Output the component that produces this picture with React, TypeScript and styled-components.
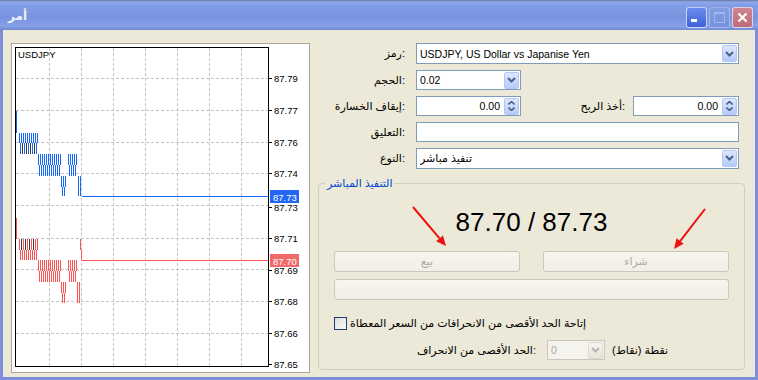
import styled, { createGlobalStyle } from 'styled-components'

const FONT = `"Liberation Sans", "DejaVu Sans", sans-serif`

const GlobalStyle = createGlobalStyle`
  html, body {
    margin: 0;
    padding: 0;
    background: #ece9d8;
  }
  body {
    font-family: ${FONT};
    font-size: 11px;
    color: #000;
  }
`

const Window = styled.div`
  width: 758px;
  height: 380px;
  display: flex;
  flex-direction: column;
  overflow: hidden;
`

const TitleBar = styled.div`
  height: 30px;
  flex: none;
  display: flex;
  align-items: center;
  justify-content: space-between;
  padding: 0 5px 0 8px;
  box-sizing: border-box;
  background: linear-gradient(
    to bottom,
    #66799f 0px,
    #8ea7ec 2px,
    #809ce4 6px,
    #7994df 18px,
    #86a1e8 26px,
    #6f89d3 30px
  );
`

const Title = styled.div`
  font-family: "DejaVu Sans", sans-serif;
  font-weight: bold;
  font-size: 12px;
  color: #eef2fc;
  margin-top: 2px;
`

const TitleButtons = styled.div`
  display: flex;
  gap: 2px;
  margin-top: 4px;
`

const TitleBtn = styled.div<{ $kind: 'min' | 'max' | 'close' }>`
  width: 21px;
  height: 21px;
  box-sizing: border-box;
  border-radius: 3px;
  border: 1px solid
    ${(p) => (p.$kind === 'max' ? 'rgba(190,205,245,0.55)' : 'rgba(235,240,255,0.75)')};
  background: ${(p) =>
    p.$kind === 'min'
      ? 'linear-gradient(#6a8cef, #3f63d8)'
      : p.$kind === 'close'
        ? 'linear-gradient(#cf8691, #bb6c78)'
        : 'linear-gradient(#849ee4, #7690dc)'};
  display: flex;
  align-items: center;
  justify-content: center;
  position: relative;
`

const MinDash = styled.div`
  position: absolute;
  left: 4px;
  bottom: 5px;
  width: 6px;
  height: 3px;
  background: #fff;
`

const MaxBox = styled.div`
  width: 11px;
  height: 11px;
  box-sizing: border-box;
  border: 1px solid #a2b6ea;
  border-top-width: 2px;
`

const Frame = styled.div`
  flex: 1;
  display: flex;
  align-items: flex-start;
  border: 3px solid #7d8edb;
  border-top: none;
  background: #ece9d8;
  padding: 13px 0 0 8px;
  box-sizing: border-box;
`

const ChartPanel = styled.div`
  width: 299px;
  height: 330px;
  flex: none;
  box-sizing: border-box;
  border: 1px solid #aca899;
  background: #fff;
  svg {
    display: block;
  }
`

const Side = styled.div`
  width: 427px;
  margin-left: 8px;
  display: flex;
  flex-direction: column;
`

const Rows = styled.div`
  display: flex;
  flex-direction: column;
  gap: 6px;
  padding-right: 6px;
`

const Row = styled.div<{ $h: number }>`
  display: flex;
  align-items: center;
  height: ${(p) => p.$h}px;
`

// the dialog is a left-to-right window, so a trailing colon lands on the right
const Label = styled.div<{ $w?: number }>`
  ${(p) => (p.$w ? `width: ${p.$w}px; flex: none;` : 'flex: 1;')}
  text-align: right;
  white-space: nowrap;
  margin-right: ${(p) => (p.$w ? 11 : 8)}px;
`

const Field = styled.div<{ $w: number; $h: number; $disabled?: boolean }>`
  width: ${(p) => p.$w}px;
  height: ${(p) => p.$h}px;
  flex: none;
  box-sizing: border-box;
  border: 1px solid ${(p) => (p.$disabled ? '#c9c7ba' : '#7f9db9')};
  background: ${(p) => (p.$disabled ? '#f4f3ee' : '#fff')};
  color: ${(p) => (p.$disabled ? '#aca899' : '#000')};
  display: flex;
  align-items: center;
  padding-left: 3px;
  font-size: 10.5px;
`

const FieldText = styled.span<{ $right?: boolean }>`
  flex: 1;
  white-space: nowrap;
  overflow: hidden;
  text-align: ${(p) => (p.$right ? 'right' : 'left')};
  padding-right: ${(p) => (p.$right ? 4 : 0)}px;
`

const ArabicText = styled.span`
  font-size: 11px;
`

const SideBtn = styled.div<{ $disabled?: boolean }>`
  width: 15px;
  height: 17px;
  margin-right: 1px;
  flex: none;
  box-sizing: border-box;
  border: 1px solid ${(p) => (p.$disabled ? '#dcdad0' : '#b4c7f3')};
  border-radius: 2px;
  background: ${(p) =>
    p.$disabled ? 'linear-gradient(#f6f5f0, #e6e4da)' : 'linear-gradient(#dde7fe, #b6cbfa)'};
  display: flex;
  flex-direction: column;
  align-items: center;
  justify-content: center;
  gap: 2px;
`

const GroupBox = styled.div`
  margin-top: 15px;
  position: relative;
  height: 187px;
  box-sizing: border-box;
  border: 1px solid #d0d0bf;
  border-radius: 4px;
  padding: 0 15px;
`

const Legend = styled.div`
  position: absolute;
  top: -7px;
  left: 6px;
  padding: 0 2px;
  background: #ece9d8;
  color: #0046d5;
  line-height: 13px;
`

const Price = styled.div`
  margin-top: 23px;
  height: 30px;
  line-height: 30px;
  font-size: 26px;
  text-align: center;
`

const BtnRow = styled.div`
  margin-top: 14px;
  display: flex;
  justify-content: space-between;
`

const DisabledBtn = styled.div<{ $w?: number }>`
  width: ${(p) => (p.$w ? `${p.$w}px` : 'auto')};
  height: 21px;
  box-sizing: border-box;
  border: 1px solid #cac8bb;
  border-radius: 3px;
  background: linear-gradient(#f6f5ef, #f1efe6);
  color: #aca899;
  display: flex;
  align-items: center;
  justify-content: center;
`

const WideBar = styled(DisabledBtn)`
  margin-top: 7px;
`

const CheckRow = styled.div`
  margin-top: 17px;
  height: 13px;
  display: flex;
  align-items: center;
  gap: 3px;
`

const CheckBox = styled.div`
  width: 13px;
  height: 13px;
  box-sizing: border-box;
  border: 1px solid #1c3f6e;
  background: linear-gradient(135deg, #dcdcd7, #fbfbf9);
`

const DevRow = styled.div`
  margin-top: 10px;
  height: 20px;
  display: flex;
  align-items: center;
`

const Units = styled.span`
  margin-left: 7px;
  white-space: nowrap;
`

const Arrows = styled.svg`
  position: absolute;
  left: 0;
  top: 0;
  pointer-events: none;
`

function Chevron({ color = '#4d6185' }: { color?: string }) {
  return (
    <svg width="9" height="6" viewBox="0 0 9 6">
      <path d="M1 1 L4.5 4.5 L8 1" stroke={color} strokeWidth="2" fill="none" />
    </svg>
  )
}

function SmallArrow({ up }: { up?: boolean }) {
  return (
    <svg width="7" height="4" viewBox="0 0 7 4">
      <path d={up ? 'M0.5 3.5 L3.5 0.5 L6.5 3.5' : 'M0.5 0.5 L3.5 3.5 L6.5 0.5'} stroke="#4d6185" strokeWidth="1.6" fill="none" />
    </svg>
  )
}

function Combo({ w, h, children, disabled }: { w: number; h: number; children?: React.ReactNode; disabled?: boolean }) {
  return (
    <Field $w={w} $h={h} $disabled={disabled}>
      <FieldText>{children}</FieldText>
      <SideBtn $disabled={disabled}>
        <Chevron color={disabled ? '#b8b6aa' : '#4d6185'} />
      </SideBtn>
    </Field>
  )
}

function Spin({ w, value }: { w: number; value: string }) {
  return (
    <Field $w={w} $h={20}>
      <FieldText $right>{value}</FieldText>
      <SideBtn>
        <SmallArrow up />
        <SmallArrow />
      </SideBtn>
    </Field>
  )
}

// chart drawn in page coordinates
const OX = 12
const OY = 44
const gridX = [49, 81, 113, 145, 177, 209, 241]
const gridY = [78, 110, 142, 173, 205, 238, 269, 301, 333]
const axis: [number, string][] = [
  [78, '87.79'],
  [110, '87.77'],
  [142, '87.76'],
  [173, '87.74'],
  [207, '87.73'],
  [238, '87.71'],
  [270, '87.69'],
  [301, '87.68'],
  [333, '87.66'],
  [364, '87.65'],
]

type Seg = [number, number, number, number, number, string, number?]

function hatch(segs: Seg[]) {
  const out: JSX.Element[] = []
  segs.forEach(([x1, x2, y1, y2, off, color, step = 2], i) => {
    for (let x = x1 + off; x <= x2; x += step) {
      out.push(<line key={`${i}-${x}`} x1={x + 0.5} x2={x + 0.5} y1={y1} y2={y2} stroke={color} />)
    }
  })
  return out
}

const BLUE = '#1666ff'
const RED = '#ff5252'
const DARK = '#3a3a3a'

const blueSegs: Seg[] = [
  [16, 16, 111, 133, 0, BLUE],
  [19, 37, 133, 143, 0, BLUE],
  [19, 37, 143, 154, 1, BLUE],
  [20, 36, 143, 154, 2, DARK, 4],
  [38, 60, 154, 165, 0, BLUE],
  [38, 60, 165, 176, 1, BLUE],
  [61, 65, 176, 187, 0, BLUE],
  [61, 65, 187, 196, 1, BLUE],
  [68, 76, 154, 165, 0, BLUE],
  [68, 76, 165, 176, 1, BLUE],
  [77, 81, 176, 196, 1, BLUE],
]

const redSegs: Seg[] = [
  [16, 16, 218, 239, 0, RED],
  [19, 37, 239, 250, 0, RED],
  [20, 36, 239, 250, 1, DARK, 4],
  [19, 37, 250, 260, 1, RED],
  [38, 60, 260, 271, 0, RED],
  [38, 60, 271, 282, 1, RED],
  [61, 65, 282, 293, 0, RED],
  [61, 65, 293, 303, 1, RED],
  [68, 76, 260, 271, 0, RED],
  [68, 76, 271, 282, 1, RED],
  [77, 79, 282, 303, 0, RED],
  [80, 81, 239, 250, 0, RED],
  [81, 81, 250, 260, 0, RED],
]

function Chart() {
  return (
    <svg width={297} height={328} viewBox={`${OX} ${OY} 297 328`} shapeRendering="crispEdges">
      {gridX.map((x) => (
        <line key={`gx${x}`} x1={x + 0.5} x2={x + 0.5} y1={48} y2={366} stroke="#c4c4c4" strokeDasharray="3 2" />
      ))}
      {gridY.map((y) => (
        <line key={`gy${y}`} x1={16} x2={268} y1={y + 0.5} y2={y + 0.5} stroke="#c4c4c4" strokeDasharray="3 2" />
      ))}
      <text x={18} y={58} fontSize="9.5" fontFamily={FONT} fill="#000">
        USDJPY
      </text>
      {hatch(blueSegs)}
      {hatch(redSegs)}
      <line x1={82} x2={268} y1={196.5} y2={196.5} stroke={BLUE} />
      <line x1={82} x2={268} y1={260.5} y2={260.5} stroke={RED} />
      <path d="M15.5 47 V366.5 H268.5 V47 M15 47.5 H268.5" stroke="#000" fill="none" />
      {axis.map(([y, t]) => (
        <g key={t + y}>
          <line x1={268} x2={272} y1={y + 0.5} y2={y + 0.5} stroke="#000" />
          <text x={274} y={y + 4} fontSize="9.5" fontFamily={FONT} fill="#000" shapeRendering="auto">
            {t}
          </text>
        </g>
      ))}
      <rect x={270} y={190} width={29} height={13} fill="#2467f5" />
      <text x={273} y={200.5} fontSize="9.5" fontFamily={FONT} fill="#fff">
        87.73
      </text>
      <rect x={270} y={254} width={29} height={13} fill="#f06a6a" />
      <text x={273} y={264.5} fontSize="9.5" fontFamily={FONT} fill="#fff">
        87.70
      </text>
    </svg>
  )
}

function Arrow({ x1, y1, x2, y2 }: { x1: number; y1: number; x2: number; y2: number }) {
  const dx = x2 - x1
  const dy = y2 - y1
  const len = Math.hypot(dx, dy)
  const ux = dx / len
  const uy = dy / len
  const bx = x2 - ux * 10
  const by = y2 - uy * 10
  const px = -uy * 4.5
  const py = ux * 4.5
  return (
    <g>
      <line x1={x1} y1={y1} x2={bx} y2={by} stroke="#ee1111" strokeWidth="2" />
      <polygon points={`${x2},${y2} ${bx + px},${by + py} ${bx - px},${by - py}`} fill="#ee1111" />
    </g>
  )
}

export default function App() {
  return (
    <>
      <GlobalStyle />
      <Window>
        <TitleBar>
          <Title>أمر</Title>
          <TitleButtons>
            <TitleBtn $kind="min">
              <MinDash />
            </TitleBtn>
            <TitleBtn $kind="max">
              <MaxBox />
            </TitleBtn>
            <TitleBtn $kind="close">
              <svg width="11" height="11" viewBox="0 0 11 11">
                <path d="M1.5 1.5 L9.5 9.5 M9.5 1.5 L1.5 9.5" stroke="#fff" strokeWidth="2.2" />
              </svg>
            </TitleBtn>
          </TitleButtons>
        </TitleBar>
        <Frame>
          <ChartPanel>
            <Chart />
          </ChartPanel>
          <Side>
            <Rows>
              <Row $h={21}>
                <Label $w={87}>رمز:</Label>
                <Combo w={323} h={21}>
                  USDJPY, US Dollar vs Japanise Yen
                </Combo>
              </Row>
              <Row $h={20}>
                <Label $w={87}>الحجم:</Label>
                <Combo w={105} h={20}>
                  0.02
                </Combo>
              </Row>
              <Row $h={20}>
                <Label $w={87}>إيقاف الخسارة:</Label>
                <Spin w={105} value="0.00" />
                <Label>أخذ الربح:</Label>
                <Spin w={106} value="0.00" />
              </Row>
              <Row $h={20}>
                <Label $w={87}>التعليق:</Label>
                <Field $w={323} $h={20} />
              </Row>
              <Row $h={20}>
                <Label $w={87}>النوع:</Label>
                <Combo w={323} h={21}>
                  <ArabicText>تنفيذ مباشر</ArabicText>
                </Combo>
              </Row>
            </Rows>
            <GroupBox>
              <Legend>التنفيذ المباشر</Legend>
              <Arrows width={425} height={80}>
                <Arrow x1={94} y1={23} x2={127} y2={62} />
                <Arrow x1={386} y1={25} x2={355} y2={65} />
              </Arrows>
              <Price>87.70 / 87.73</Price>
              <BtnRow>
                <DisabledBtn $w={186}>بيع</DisabledBtn>
                <DisabledBtn $w={186}>شراء</DisabledBtn>
              </BtnRow>
              <WideBar />
              <CheckRow>
                <CheckBox />
                <ArabicText>إتاحة الحد الأقصى من الانحرافات من السعر المعطاة</ArabicText>
              </CheckRow>
              <DevRow>
                <Label $w={202}>الحد الأقصى من الانحراف:</Label>
                <Combo w={58} h={20} disabled>
                  0
                </Combo>
                <Units>نقطة (نقاط)</Units>
              </DevRow>
            </GroupBox>
          </Side>
        </Frame>
      </Window>
    </>
  )
}
